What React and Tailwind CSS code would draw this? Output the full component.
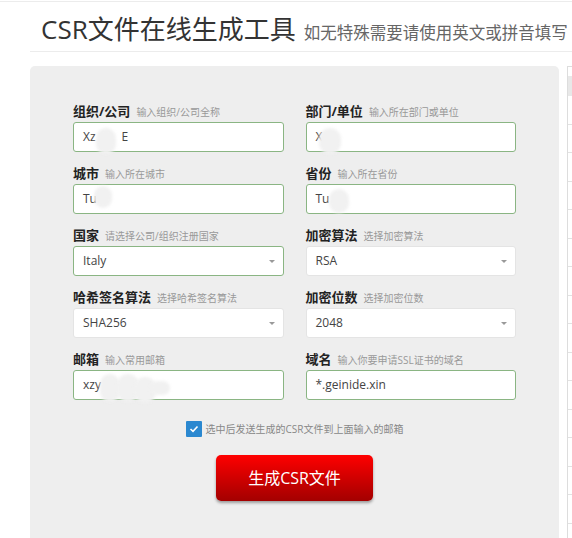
import React from "react";

const cjk = "font-['Open_Sans','Noto_Sans_CJK_SC',sans-serif]";

const Blob = ({ className }) => (
  <span className={`absolute rounded-full bg-[#f1f1f1] blur-[1.5px] ${className}`} />
);

const Field = ({ label, hint, children }) => (
  <div className="flex flex-col">
    <div className="flex items-baseline h-[18px] mb-[2px] whitespace-nowrap">
      <span className="text-[13px] font-bold text-[#222] leading-[18px]">{label}</span>
      <span className="ml-[6px] text-[10px] text-[#999] leading-[18px]">{hint}</span>
    </div>
    {children}
  </div>
);

const TextBox = ({ children }) => (
  <div className="relative h-[30px] rounded-[3px] border border-[#8ab583] bg-white pl-[9px] flex items-center text-[12px] text-[#444]">
    {children}
  </div>
);

const SelectBox = ({ value, green }) => (
  <div
    className={`h-[30px] rounded-[3px] bg-white pl-[9px] pr-[8px] flex items-center justify-between text-[12px] text-[#444] border ${
      green ? "border-[#8ab583]" : "border-[#e4e4e4]"
    }`}
  >
    <span>{value}</span>
    <span className="w-0 h-0 border-l-[3px] border-r-[3px] border-t-[3px] border-l-transparent border-r-transparent border-t-[#999]" />
  </div>
);

const App = () => {
  const rows = Array.from({ length: 15 });
  return (
    <div className={`w-[572px] h-[538px] overflow-hidden bg-white pt-px ${cjk}`}>
      <div className="border-t border-[#ececec]" />
      <div className="ml-[30px] border-b border-[#ececec] h-[50px] flex items-end pb-[5px] pl-[11px] whitespace-nowrap">
        <h1 className="shrink-0 text-[26px] leading-[34px] text-[#333] font-normal">CSR文件在线生成工具</h1>
        <span className="shrink-0 ml-[8px] text-[16.5px] leading-[26px] text-[#666]">
          如无特殊需要请使用英文或拼音填写
        </span>
      </div>
      <div className="flex mt-[14px] ml-[30px]">
        <div className="w-[529px] shrink-0 h-[480px] bg-[#eeeeee] rounded-t-[5px] pt-[36px] px-[43px]">
          <div className="grid grid-cols-2 gap-x-[22px] gap-y-[12px]">
            <Field label="组织/公司" hint="输入组织/公司全称">
              <TextBox>
                <span>Xz</span>
                <span className="ml-[26px]">E</span>
                <Blob className="left-[22px] top-[5px] w-[20px] h-[26px]" />
              </TextBox>
            </Field>
            <Field label="部门/单位" hint="输入所在部门或单位">
              <TextBox>
                <span>X</span>
                <Blob className="left-[12px] top-[5px] w-[22px] h-[26px]" />
              </TextBox>
            </Field>
            <Field label="城市" hint="输入所在城市">
              <TextBox>
                <span>Tu</span>
                <Blob className="left-[20px] top-[1px] w-[18px] h-[22px]" />
              </TextBox>
            </Field>
            <Field label="省份" hint="输入所在省份">
              <TextBox>
                <span>Tu</span>
                <Blob className="left-[22px] top-[4px] w-[20px] h-[24px]" />
              </TextBox>
            </Field>
            <Field label="国家" hint="请选择公司/组织注册国家">
              <SelectBox value="Italy" green />
            </Field>
            <Field label="加密算法" hint="选择加密算法">
              <SelectBox value="RSA" />
            </Field>
            <Field label="哈希签名算法" hint="选择哈希签名算法">
              <SelectBox value="SHA256" />
            </Field>
            <Field label="加密位数" hint="选择加密位数">
              <SelectBox value="2048" />
            </Field>
            <Field label="邮箱" hint="输入常用邮箱">
              <TextBox>
                <span>xzy</span>
                <Blob className="left-[26px] top-[3px] w-[20px] h-[28px]" />
                <Blob className="left-[43px] top-[3px] w-[22px] h-[28px]" />
                <Blob className="left-[60px] top-[6px] w-[22px] h-[26px]" />
                <Blob className="left-[76px] top-[10px] w-[20px] h-[14px]" />
              </TextBox>
            </Field>
            <Field label="域名" hint="输入你要申请SSL证书的域名">
              <TextBox>
                <span>*.geinide.xin</span>
              </TextBox>
            </Field>
          </div>
          <div className="mt-[21px] flex items-center justify-center">
            <span className="w-[16px] h-[16px] bg-[#2b88d0] flex items-center justify-center rounded-[1px]">
              <svg width="10" height="8" viewBox="0 0 10 8">
                <path d="M1.5 4 L4 6.3 L8.5 1.5" fill="none" stroke="#fff" strokeWidth="1.6" />
              </svg>
            </span>
            <span className="ml-[4px] text-[10px] text-[#888]">选中后发送生成的CSR文件到上面输入的邮箱</span>
          </div>
          <div className="mt-[18px] flex justify-center">
            <button className="w-[157px] h-[46px] rounded-[5px] bg-gradient-to-b from-[#ff0000] to-[#a30000] text-white text-[16px] shadow-[0_2px_3px_rgba(0,0,0,0.35)]">
              生成CSR文件
            </button>
          </div>
        </div>
        <div className="ml-[8px] w-[100px] shrink-0 border-l border-t border-[#dddddd]">
          <div className="h-[9px]" />
          <div className="h-[20px] bg-[#e8e8e8]" />
          {rows.map((_, i) => (
            <div key={i} className="h-[28.5px] border-b border-[#e2e2e2]" />
          ))}
        </div>
      </div>
    </div>
  );
};

export default App;
